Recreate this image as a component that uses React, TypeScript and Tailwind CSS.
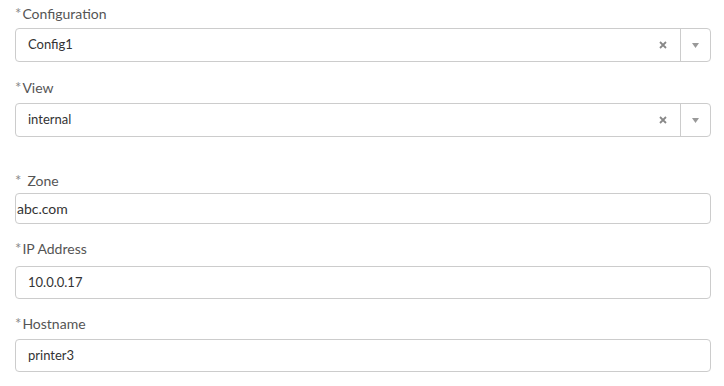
import React from "react"

function Label({ text, spaced }: { text: string; spaced?: boolean }) {
  return (
    <div className="flex items-start h-[18px] text-[14px] leading-[18px] text-[#555]">
      <span className={"text-[15px] leading-[15px] text-[#888] mt-[1px] " + (spaced ? "mr-[6px]" : "mr-[1px]")}>*</span>
      <span>{text}</span>
    </div>
  )
}

function SelectBox({ value }: { value: string }) {
  return (
    <div className="flex items-stretch h-[34px] border border-[#ccc] rounded-[4px] bg-white">
      <div className="flex-1 flex items-center pl-[12px] text-[13px] text-[#333]">{value}</div>
      <div className="w-[34px] flex items-center justify-center">
        <svg width="8" height="8" viewBox="0 0 8 8">
          <path d="M1 1 L7 7 M7 1 L1 7" stroke="#888" strokeWidth="1.8" />
        </svg>
      </div>
      <div className="w-[30px] border-l border-[#ccc] flex items-center justify-center">
        <svg width="7" height="5" viewBox="0 0 7 5">
          <path d="M0 0 L7 0 L3.5 5 Z" fill="#999" />
        </svg>
      </div>
    </div>
  )
}

function TextBox({ value, flush }: { value: string; flush?: boolean }) {
  return (
    <div
      className={
        "flex items-center border border-[#ccc] rounded-[4px] bg-white text-[#333] " +
        (flush ? "h-[31px] pl-[1px] text-[14px]" : "h-[33px] pl-[12px] text-[13px]")
      }
    >
      {value}
    </div>
  )
}

export default function App() {
  return (
    <div
      className="w-[724px] h-[386px] bg-white pl-[15px] pr-[13px] pt-[5px]"
      style={{ fontFamily: "Lato, 'Noto Sans', sans-serif" }}
    >
      <Label text="Configuration" />
      <div className="mt-[5px]">
        <SelectBox value="Config1" />
      </div>
      <div className="mt-[17px]">
        <Label text="View" />
      </div>
      <div className="mt-[6px]">
        <SelectBox value="internal" />
      </div>
      <div className="mt-[35px]">
        <Label text="Zone" spaced />
      </div>
      <div className="mt-[3px]">
        <TextBox value="abc.com" flush />
      </div>
      <div className="mt-[16px]">
        <Label text="IP Address" />
      </div>
      <div className="mt-[8px]">
        <TextBox value="10.0.0.17" />
      </div>
      <div className="mt-[16px]">
        <Label text="Hostname" />
      </div>
      <div className="mt-[6px]">
        <TextBox value="printer3" />
      </div>
    </div>
  )
}
